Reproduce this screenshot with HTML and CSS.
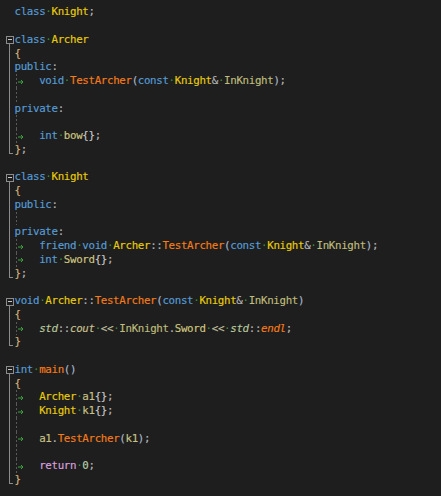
FILE: index.html
```html
<!DOCTYPE html>
<html>
<head>
<meta charset="utf-8">
<link rel="stylesheet" href="styles.css">
</head>
<body>
<div class="editor">
  <div class="line"><span class="gut"></span><span class="code"><span class="k">class</span><span class="w">·</span><span class="t">Knight</span><span class="o">;</span></span></div>
  <div class="line"><span class="gut"></span><span class="code"></span></div>
  <div class="line"><span class="gut fs"></span><span class="code"><span class="k">class</span><span class="w">·</span><span class="t">Archer</span></span></div>
  <div class="line"><span class="gut fm"></span><span class="code"><span class="b">{</span></span></div>
  <div class="line"><span class="gut fm"></span><span class="code"><span class="k">public</span><span class="o">:</span></span></div>
  <div class="line"><span class="gut fm"></span><span class="code g"><span class="tab"><svg width="6" height="6" viewBox="0 0 6 6"><path d="M0 3H5M3 1L5 3L3 5" fill="none" stroke="#3aa23a" stroke-width="1"/></svg></span><span class="k">void</span><span class="w">·</span><span class="f">TestArcher</span><span class="pa">(</span><span class="k">const</span><span class="w">·</span><span class="t">Knight</span><span class="o">&amp;</span><span class="w">·</span><span class="p">InKnight</span><span class="pa">)</span><span class="o">;</span></span></div>
  <div class="line"><span class="gut fm"></span><span class="code g"></span></div>
  <div class="line"><span class="gut fm"></span><span class="code"><span class="k">private</span><span class="o">:</span></span></div>
  <div class="line"><span class="gut fm"></span><span class="code g"></span></div>
  <div class="line"><span class="gut fm"></span><span class="code g"><span class="tab"><svg width="6" height="6" viewBox="0 0 6 6"><path d="M0 3H5M3 1L5 3L3 5" fill="none" stroke="#3aa23a" stroke-width="1"/></svg></span><span class="k">int</span><span class="w">·</span><span class="m">bow</span><span class="c">{}</span><span class="o">;</span></span></div>
  <div class="line"><span class="gut fe"></span><span class="code"><span class="b">}</span><span class="o">;</span></span></div>
  <div class="line"><span class="gut"></span><span class="code"></span></div>
  <div class="line"><span class="gut fs"></span><span class="code"><span class="k">class</span><span class="w">·</span><span class="t">Knight</span></span></div>
  <div class="line"><span class="gut fm"></span><span class="code"><span class="b">{</span></span></div>
  <div class="line"><span class="gut fm"></span><span class="code"><span class="k">public</span><span class="o">:</span></span></div>
  <div class="line"><span class="gut fm"></span><span class="code g"></span></div>
  <div class="line"><span class="gut fm"></span><span class="code"><span class="k">private</span><span class="o">:</span></span></div>
  <div class="line"><span class="gut fm"></span><span class="code g"><span class="tab"><svg width="6" height="6" viewBox="0 0 6 6"><path d="M0 3H5M3 1L5 3L3 5" fill="none" stroke="#3aa23a" stroke-width="1"/></svg></span><span class="k">friend</span><span class="w">·</span><span class="k">void</span><span class="w">·</span><span class="t">Archer</span><span class="o">::</span><span class="f">TestArcher</span><span class="pa">(</span><span class="k">const</span><span class="w">·</span><span class="t">Knight</span><span class="o">&amp;</span><span class="w">·</span><span class="p">InKnight</span><span class="pa">)</span><span class="o">;</span></span></div>
  <div class="line"><span class="gut fm"></span><span class="code g"><span class="tab"><svg width="6" height="6" viewBox="0 0 6 6"><path d="M0 3H5M3 1L5 3L3 5" fill="none" stroke="#3aa23a" stroke-width="1"/></svg></span><span class="k">int</span><span class="w">·</span><span class="m">Sword</span><span class="c">{}</span><span class="o">;</span></span></div>
  <div class="line"><span class="gut fe"></span><span class="code"><span class="b">}</span><span class="o">;</span></span></div>
  <div class="line"><span class="gut"></span><span class="code"></span></div>
  <div class="line"><span class="gut fs"></span><span class="code"><span class="k">void</span><span class="w">·</span><span class="t">Archer</span><span class="o">::</span><span class="f">TestArcher</span><span class="pa">(</span><span class="k">const</span><span class="w">·</span><span class="t">Knight</span><span class="o">&amp;</span><span class="w">·</span><span class="p">InKnight</span><span class="pa">)</span></span></div>
  <div class="line"><span class="gut fm"></span><span class="code"><span class="b">{</span></span></div>
  <div class="line"><span class="gut fm"></span><span class="code g"><span class="tab"><svg width="6" height="6" viewBox="0 0 6 6"><path d="M0 3H5M3 1L5 3L3 5" fill="none" stroke="#3aa23a" stroke-width="1"/></svg></span><span class="ns">std</span><span class="o">::</span><span class="iv">cout</span><span class="w">·</span><span class="op">&lt;&lt;</span><span class="w">·</span><span class="p">InKnight</span><span class="o">.</span><span class="m">Sword</span><span class="w">·</span><span class="op">&lt;&lt;</span><span class="w">·</span><span class="ns">std</span><span class="o">::</span><span class="if">endl</span><span class="o">;</span></span></div>
  <div class="line"><span class="gut fe"></span><span class="code"><span class="b">}</span></span></div>
  <div class="line"><span class="gut"></span><span class="code"></span></div>
  <div class="line"><span class="gut fs"></span><span class="code"><span class="k">int</span><span class="w">·</span><span class="f">main</span><span class="pa">()</span></span></div>
  <div class="line"><span class="gut fm"></span><span class="code"><span class="b">{</span></span></div>
  <div class="line"><span class="gut fm"></span><span class="code g"><span class="tab"><svg width="6" height="6" viewBox="0 0 6 6"><path d="M0 3H5M3 1L5 3L3 5" fill="none" stroke="#3aa23a" stroke-width="1"/></svg></span><span class="t">Archer</span><span class="w">·</span><span class="v">a1</span><span class="c">{}</span><span class="o">;</span></span></div>
  <div class="line"><span class="gut fm"></span><span class="code g"><span class="tab"><svg width="6" height="6" viewBox="0 0 6 6"><path d="M0 3H5M3 1L5 3L3 5" fill="none" stroke="#3aa23a" stroke-width="1"/></svg></span><span class="t">Knight</span><span class="w">·</span><span class="v">k1</span><span class="c">{}</span><span class="o">;</span></span></div>
  <div class="line"><span class="gut fm"></span><span class="code g"></span></div>
  <div class="line"><span class="gut fm"></span><span class="code g"><span class="tab"><svg width="6" height="6" viewBox="0 0 6 6"><path d="M0 3H5M3 1L5 3L3 5" fill="none" stroke="#3aa23a" stroke-width="1"/></svg></span><span class="v">a1</span><span class="o">.</span><span class="f">TestArcher</span><span class="pa">(</span><span class="v">k1</span><span class="pa">)</span><span class="o">;</span></span></div>
  <div class="line"><span class="gut fm"></span><span class="code g"></span></div>
  <div class="line"><span class="gut fm"></span><span class="code g"><span class="tab"><svg width="6" height="6" viewBox="0 0 6 6"><path d="M0 3H5M3 1L5 3L3 5" fill="none" stroke="#3aa23a" stroke-width="1"/></svg></span><span class="r">return</span><span class="w">·</span><span class="n">0</span><span class="o">;</span></span></div>
  <div class="line"><span class="gut fe"></span><span class="code"><span class="b">}</span></span></div>
  <div class="line"><span class="gut"></span><span class="code"><span class="caret"></span></span></div>
</div>
</body>
</html>
```

FILE: styles.css
```css
html, body {
  margin: 0;
  padding: 0;
  background: #1e1e1e;
  overflow: hidden;
}

.editor {
  padding-top: 5.4px;
  font-family: "DejaVu Sans Mono", monospace;
  font-size: 10.8px;
  letter-spacing: -0.34px;
  -webkit-text-stroke: 0.15px;
  color: #dadada;
}

.line {
  display: flex;
  height: 13.75px;
  line-height: 13.75px;
  white-space: pre;
}

.gut {
  width: 14.5px;
  flex: none;
  position: relative;
}

.code {
  flex: 1;
  position: relative;
}

/* fold outline */
.fs::before {
  content: "";
  position: absolute;
  left: 5.5px;
  top: 3.5px;
  width: 6px;
  height: 6px;
  border: 1px solid #8c8c8c;
}
.fs::after {
  content: "";
  position: absolute;
  left: 7.5px;
  top: 6.5px;
  width: 4px;
  height: 1px;
  background: #c8c8c8;
}
.fs {
  background: linear-gradient(#8c8c8c, #8c8c8c) no-repeat 9px 11.5px / 1px 3px;
}
.fm {
  background: linear-gradient(#8c8c8c, #8c8c8c) no-repeat 9px 0 / 1px 100%;
}
.fe {
  background:
    linear-gradient(#8c8c8c, #8c8c8c) no-repeat 9px 0 / 1px 11px,
    linear-gradient(#8c8c8c, #8c8c8c) no-repeat 9px 10px / 4px 1px;
}

/* indent guide */
.g {
  background: repeating-linear-gradient(to bottom, #5a5a5a 0 2px, transparent 2px 4px) no-repeat 1.5px 0 / 1px 100%;
}

.tab {
  display: inline-block;
  width: 24.7px;
  padding-left: 3px;
  box-sizing: border-box;
}
.tab svg {
  display: inline-block;
  vertical-align: -0.5px;
}

.caret {
  display: inline-block;
  width: 3px;
  height: 6px;
  margin-left: 1px;
  border: 1px solid #2f8f2f;
  vertical-align: -8px;
}

.k { color: #569cd6; }
.t { color: #e8cc0c; }
.f { color: #f57c18; }
.p { color: #bfbc7c; }
.m { color: #cfc67e; }
.v { color: #c7c284; }
.b { color: #d6b27a; }
.c { color: #c8c8c8; }
.pa { color: #a8b8cc; }
.o { color: #b4b4b4; }
.op { color: #bdbb9a; }
.w { color: #3a8f3a; -webkit-text-stroke: 0; }
.n { color: #b5cea8; }
.r { color: #d8a0df; }
.ns { color: #b8c89c; font-style: italic; }
.iv { color: #c8c08e; font-style: italic; }
.if { color: #f57c18; font-style: italic; }
```
